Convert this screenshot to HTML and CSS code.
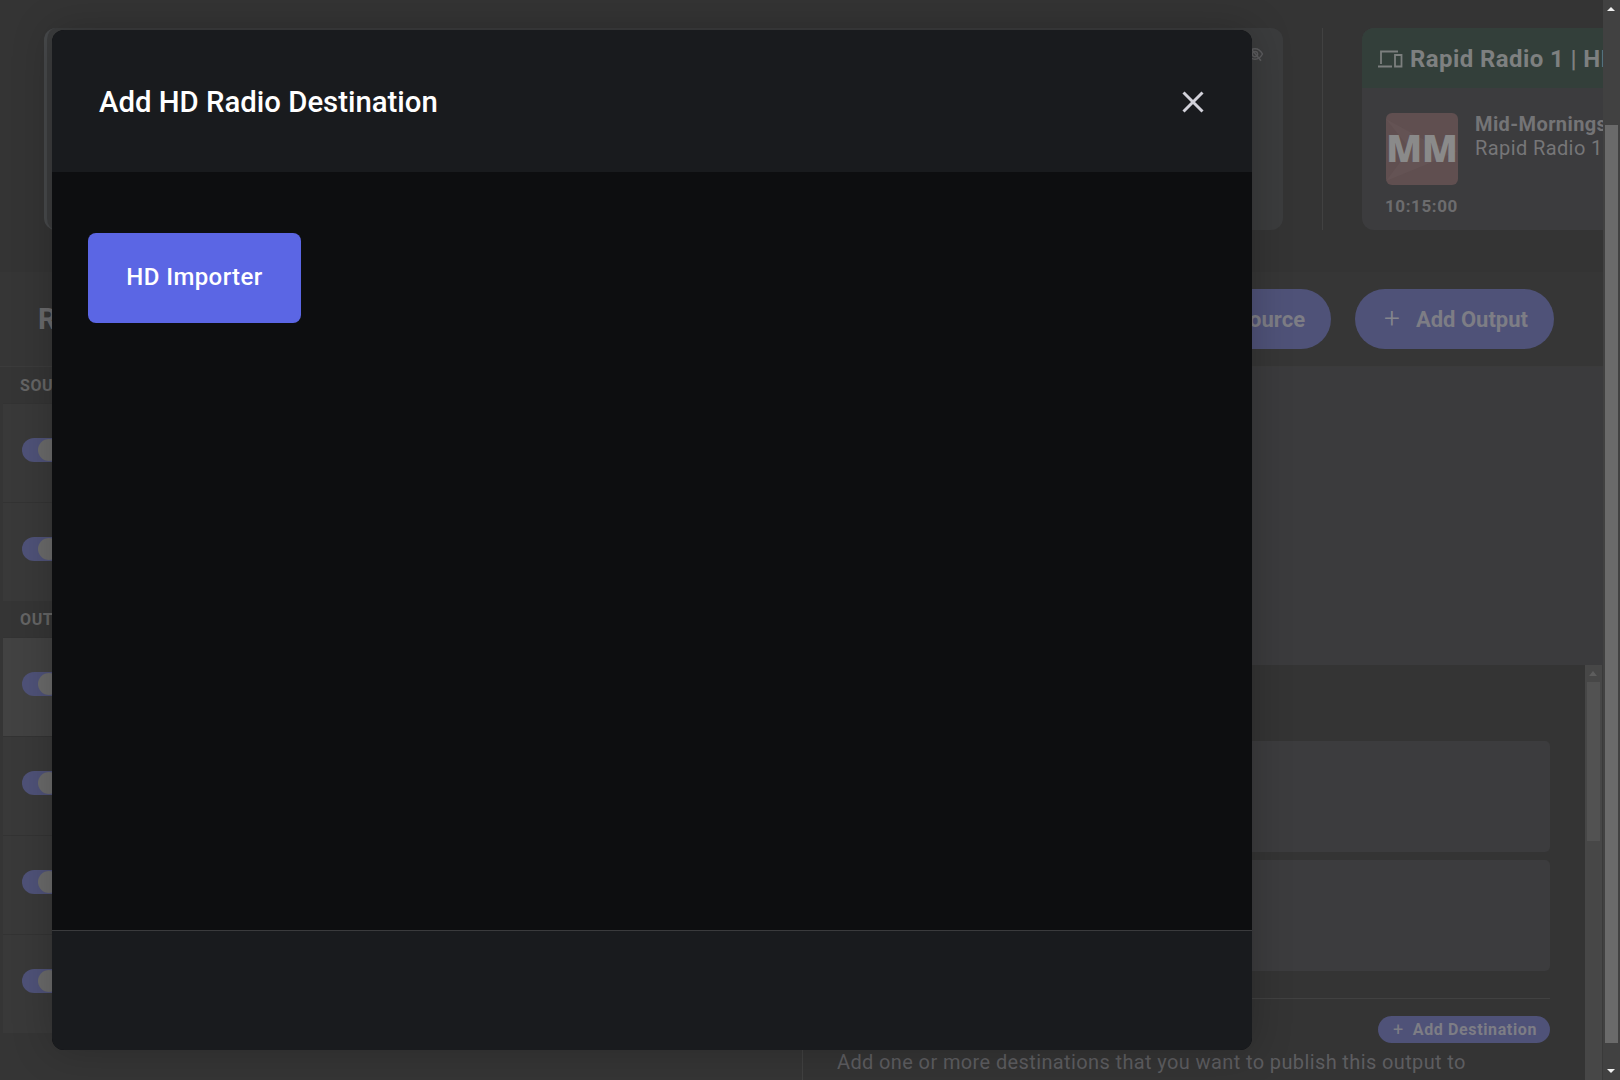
FILE: index.html
```html
<!DOCTYPE html>
<html lang="en">
<head>
<meta charset="utf-8">
<title>Add HD Radio Destination</title>
<link rel="stylesheet" href="styles.css">
</head>
<body>
<div class="shell">
  <div class="page">
    <section class="top">
      <div class="preview-card">
        <svg class="eye-icon" viewBox="0 0 24 24"><path d="M2 12c2.500-4.500 6-7 10-7s7.500 2.500 10 7c-2.500 4.500-6 7-10 7s-7.500-2.500-10-7z"/><circle cx="12" cy="12" r="3.500"/><path d="M5 3l15 18"/></svg>
      </div>
      <div class="top-sep"></div>
      <div class="station-card">
        <div class="station-head">
          <svg class="device-icon" viewBox="0 0 26 20"><path d="M4 15V2.500h17M1 17.500h14M18 6h6.500v11.500H18z"/></svg>
          <span class="station-name">Rapid Radio 1 | HD</span>
        </div>
        <div class="station-body">
          <div class="show-row">
            <div class="thumb">
              <svg class="thumb-art" viewBox="0 0 72 72"><path d="M0 6l44 24 28 8-28 12L0 68l24-32z"/></svg>
              <span class="thumb-text">MM</span>
            </div>
            <div class="show-text">
              <div class="show-title">Mid-Mornings</div>
              <div class="show-sub">Rapid Radio 1</div>
            </div>
          </div>
          <div class="show-time">10:15:00</div>
        </div>
      </div>
    </section>

    <section class="work-head">
      <h1 class="work-title">Routing</h1>
      <div class="work-actions">
        <button class="pill">Add Source</button>
        <button class="pill"><span class="pill-plus">+</span>Add Output</button>
      </div>
    </section>

    <section class="work-body">
      <div class="list">
        <div class="list-label">SOURCES</div>
        <div class="list-row"><span class="toggle"><span class="knob"></span></span></div>
        <div class="list-row"><span class="toggle"><span class="knob"></span></span></div>
        <div class="list-label">OUTPUTS</div>
        <div class="list-row is-selected"><span class="toggle"><span class="knob"></span></span></div>
        <div class="list-row"><span class="toggle"><span class="knob"></span></span></div>
        <div class="list-row"><span class="toggle"><span class="knob"></span></span></div>
        <div class="list-row"><span class="toggle"><span class="knob"></span></span></div>
      </div>
      <div class="detail">
        <div class="detail-top"></div>
        <div class="detail-bottom">
          <div class="dest-pane">
            <div class="dest-card"></div>
            <div class="dest-card"></div>
            <div class="dest-rule"></div>
            <div class="dest-actions">
              <button class="mini-pill"><span class="mini-plus">+</span>Add Destination</button>
            </div>
            <p class="dest-note">Add one or more destinations that you want to publish this output to</p>
          </div>
          <div class="inner-scroll">
            <span class="inner-arrow"></span>
            <span class="inner-thumb"></span>
          </div>
        </div>
      </div>
    </section>
  </div>
  <div class="scrollbar">
    <span class="arrow-up"></span>
    <span class="scroll-thumb"></span>
    <span class="arrow-down"></span>
  </div>
</div>

<div class="modal" role="dialog">
  <header class="modal-head">
    <h2 class="modal-title">Add HD Radio Destination</h2>
    <svg class="modal-close" viewBox="0 0 22 22"><path d="M1.500 1.500l19 19M20.500 1.500l-19 19"/></svg>
  </header>
  <div class="modal-body">
    <button class="importer">HD Importer</button>
  </div>
  <footer class="modal-foot"></footer>
</div>
</body>
</html>
```
FILE: styles.css
```css
* { box-sizing: border-box; }
html, body { margin: 0; height: 100%; overflow: hidden; }
body { background: #343434; font-family: Roboto, "Liberation Sans", sans-serif; color: #6e6e70; }
button { font-family: inherit; border: 0; }
h1, h2, p { margin: 0; }

.shell { display: flex; width: 1620px; height: 1080px; }
.page { width: 1603px; height: 1080px; overflow: hidden; flex: none; }

.top { display: flex; height: 272px; padding: 28px 0 0 44px; background: #343434; }
.preview-card { position: relative; flex: none; width: 1239px; height: 202px; background: #3b3c3d; border-radius: 12px; border-left: 3px solid #47494b; }
.eye-icon { position: absolute; top: 17px; right: 19px; width: 18px; height: 18px; fill: none; stroke: #5c5c5e; stroke-width: 2; }
.top-sep { flex: none; width: 1px; height: 202px; margin-left: 39px; background: #414141; }
.station-card { flex: none; width: 420px; height: 202px; margin-left: 39px; background: #3c3c3e; border-radius: 12px; overflow: hidden; }
.station-head { display: flex; align-items: center; height: 60px; padding: 1px 0 0 15px; background: #333f3a; }
.device-icon { width: 26px; height: 20px; margin-right: 7px; fill: none; stroke: #7c7f7e; stroke-width: 1.800; }
.station-name { font-size: 24px; font-weight: 700; line-height: 1; letter-spacing: 0.4px; color: #7e8080; white-space: nowrap; }
.station-body { padding: 25px 24px 0; }
.show-row { display: flex; gap: 17px; }
.thumb { position: relative; display: flex; align-items: center; justify-content: center; flex: none; width: 72px; height: 72px; padding-bottom: 3px; background: #604f50; border-radius: 6px; overflow: hidden; }
.thumb-art { position: absolute; inset: 0; fill: #645354; }
.thumb-text { position: relative; font-family: "Open Sans", Roboto, sans-serif; font-size: 37px; font-weight: 800; line-height: 1; color: #8a8a8a; }
.show-text { margin-top: -1px; }
.show-title { font-size: 20px; font-weight: 700; line-height: 24px; letter-spacing: 0.4px; color: #747476; white-space: nowrap; }
.show-sub { font-size: 20px; line-height: 24px; letter-spacing: 0.4px; color: #767678; white-space: nowrap; }
.show-time { margin-top: 11px; margin-left: -1px; font-size: 17px; font-weight: 700; line-height: 20px; letter-spacing: 0.6px; color: #6c6c6e; }

.work-head { display: flex; align-items: center; justify-content: space-between; height: 95px; padding: 0 49px 0 38px; background: #363636; border-bottom: 1px solid #3b3b3b; }
.work-title { font-size: 29px; font-weight: 700; color: #6a6a6c; }
.work-actions { display: flex; gap: 24px; }
.pill { display: flex; align-items: center; height: 60px; padding: 0 26px 0 29px; background: #4f5278; border-radius: 30px; font-size: 22px; font-weight: 700; color: #7d7d85; }
.pill-plus { margin-right: 16px; font-size: 28px; font-weight: 300; line-height: 24px; color: #85858d; }

.work-body { display: flex; height: 713px; }
.list { flex: none; width: 803px; padding-left: 3px; border-right: 1px solid #414141; background: #353535; }
.list-label { display: flex; align-items: center; height: 36px; padding-left: 17px; font-size: 16px; font-weight: 700; letter-spacing: 0.6px; color: #656565; background: #353535; }
.list-row { display: flex; align-items: center; height: 99px; padding: 0 0 6px 19px; background: #393939; border-top: 1px solid #333; }
.is-selected { background: #424242; }
.toggle { display: block; width: 42px; height: 24px; padding: 1px 2px 1px 16px; background: #4f5278; border-radius: 12px; }
.knob { display: block; width: 22px; height: 22px; background: #6a6a6a; border-radius: 50%; }

.detail { flex: 1; display: flex; flex-direction: column; min-width: 0; }
.detail-top { flex: none; height: 298px; background: #3b3b3d; }
.detail-bottom { flex: 1; display: flex; min-height: 0; background: #343434; }
.dest-pane { flex: 1; min-width: 0; padding: 76px 35px 0 34px; overflow: hidden; }
.dest-card { height: 111px; margin-bottom: 8px; background: #3c3c3e; border-radius: 5px; }
.dest-rule { height: 1px; margin-top: 27px; background: #414141; }
.dest-actions { display: flex; justify-content: flex-end; margin-top: 17px; }
.mini-pill { display: flex; align-items: center; height: 27px; padding: 0 13px 0 15px; background: #4f5278; border-radius: 14px; font-size: 16px; font-weight: 700; letter-spacing: 0.62px; color: #7d7d85; }
.mini-plus { margin-right: 9px; font-size: 18px; font-weight: 400; line-height: 16px; }
.dest-note { margin-top: 7px; font-size: 20px; line-height: 24px; letter-spacing: 0.38px; color: #5d5d60; white-space: nowrap; }
.inner-scroll { position: relative; flex: none; width: 18px; background: #474747; border-right: 1px solid #3a3a3a; }
.inner-arrow { position: absolute; top: 6px; left: 4px; border: 4px solid transparent; border-top: 0; border-bottom: 5px solid #5d5d5d; }
.inner-thumb { position: absolute; top: 17px; left: 2px; width: 13px; height: 159px; background: #525252; }

.scrollbar { position: relative; flex: none; width: 17px; height: 1080px; background: #414141; }
.scroll-thumb { position: absolute; top: 125px; left: 2px; width: 13px; height: 918px; background: #6a6a6a; }
.arrow-up { position: absolute; top: 7px; left: 4px; border: 4px solid transparent; border-top: 0; border-bottom: 4px solid #f0f0f0; }
.arrow-down { position: absolute; bottom: 7px; left: 4px; border: 4px solid transparent; border-bottom: 0; border-top: 4px solid #f0f0f0; }

.modal { position: fixed; top: 30px; left: 52px; display: flex; flex-direction: column; width: 1200px; height: 1020px; border-radius: 12px; overflow: hidden; background: #0d0e10; box-shadow: 0 0 40px rgba(0, 0, 0, 0.22); }
.modal-head { display: flex; align-items: center; justify-content: space-between; flex: none; height: 142px; padding: 0 48px 0 47px; background: #191b1e; }
.modal-title { padding-top: 1px; font-size: 29.33px; font-weight: 500; line-height: 36px; color: #fff; }
.modal-close { width: 22px; height: 22px; margin-top: 2px; fill: none; stroke: #d2d2da; stroke-width: 3; }
.modal-body { flex: 1; padding: 61px 36px; }
.importer { width: 213px; height: 90px; padding: 0 0 2px; background: #5b66e4; border-radius: 8px; font-size: 24px; font-weight: 500; letter-spacing: 0.4px; color: #fff; }
.modal-foot { flex: none; height: 120px; background: #191b1e; border-top: 1px solid #3a3b3d; }
```
